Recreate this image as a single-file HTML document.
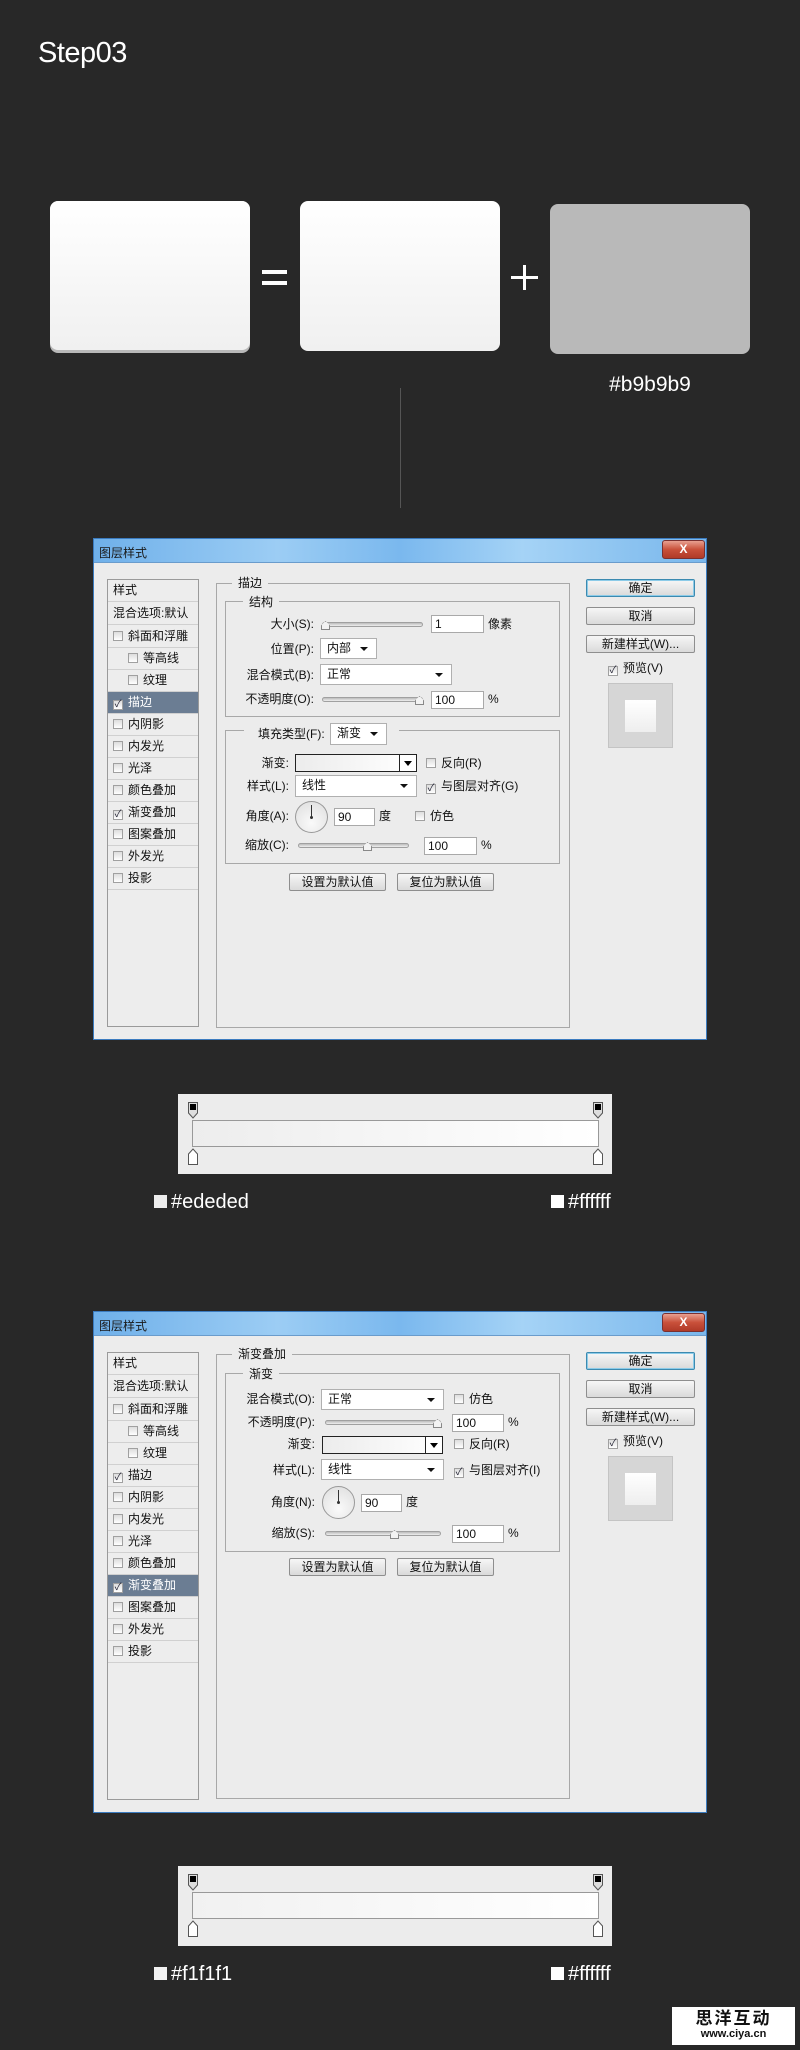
<!DOCTYPE html>
<html><head><meta charset="utf-8">
<style>
*{margin:0;padding:0;box-sizing:border-box}
body{width:800px;height:2050px;background:#282828;position:relative;overflow:hidden;font-family:"Liberation Sans","Noto Sans CJK SC",sans-serif}
.a{position:absolute;line-height:14px;white-space:nowrap}
.dlg{position:absolute;left:93px;width:614px;height:502px;background:#ececec;border:1px solid #3b7bbf;font-size:12px;color:#111;font-family:"Liberation Sans","Noto Sans CJK SC",sans-serif}
.tb{position:absolute;left:0;top:0;width:612px;height:24px;background:linear-gradient(90deg,#6fb0ea,#9ccdf4 30%,#7ab8ee 50%,#a5d3f6 70%,#79b7ec);border-bottom:1px solid #6a9ccc}
.tb span{position:absolute;left:5px;top:5px;font-size:12px;color:#1a1a1a}
.cls{position:absolute;left:568px;top:1px;width:43px;height:19px;border:1px solid #7a3030;border-radius:3px;background:linear-gradient(#e8a090,#c9503a 50%,#b03a28);color:#fff;font-weight:bold;font-size:12px;text-align:center;line-height:17px}
.list{position:absolute;left:13px;top:40px;width:92px;height:448px;border:1px solid #9a9a9a;background:#ededed}
.row{position:absolute;left:0;width:90px;height:22px;border-bottom:1px solid #d0d0d0;line-height:20px;white-space:nowrap}
.sel{background:#6b7d93;color:#fff}
.cb{display:inline-block;width:10px;height:10px;border:1px solid #a0a0a0;background:linear-gradient(#ddd,#fff);vertical-align:-1px;margin-right:5px;position:relative;font-size:10px;line-height:8px;color:#223;text-align:center}
.panel{position:absolute;border:1px solid #a8a8a8}
.lg{position:absolute;background:#ececec;padding:0 6px;line-height:14px}
.lbl{position:absolute;text-align:right;width:120px;line-height:14px;white-space:nowrap}
.inp{position:absolute;height:18px;background:#fff;border:1px solid #a9a9a9;line-height:16px;padding-left:3px}
.dd{position:absolute;height:21px;background:#fff;border:1px solid #b0b0b0;line-height:19px;padding-left:6px}
.dd:after{content:"";position:absolute;right:8px;top:8px;border-left:4px solid transparent;border-right:4px solid transparent;border-top:4px solid #111}
.sl{position:absolute;height:5px;border:1px solid #a0a0a0;border-radius:3px;background:linear-gradient(#bbb,#eee)}
.th{position:absolute;top:-2px;width:9px;height:9px;border:1px solid #888;background:#f3f3f3;clip-path:polygon(50% 0,100% 50%,100% 100%,0 100%,0 50%)}
.btn{position:absolute;height:18px;border:1px solid #8e8e8e;border-radius:2px;background:linear-gradient(#f6f6f6,#dadada);text-align:center;line-height:16px}
.gb{position:absolute;height:18px;border:1px solid #222;background:linear-gradient(90deg,#ececec,#fff)}
.gb:after{content:"";position:absolute;right:0;top:0;width:16px;height:16px;border-left:1px solid #222;background:#fff}
.gb:before{content:"";position:absolute;right:4px;top:6px;z-index:2;border-left:4px solid transparent;border-right:4px solid transparent;border-top:5px solid #000}
.dial{position:absolute;width:33px;height:32px;border-radius:50%;border:1px solid #999;background:radial-gradient(circle at 50% 70%,#fafafa,#ddd)}
.dial:before{content:"";position:absolute;left:15px;top:3px;width:1px;height:12px;background:#333}
.dial:after{content:"";position:absolute;left:14px;top:14px;width:3px;height:3px;border-radius:50%;background:#333}
.gp{position:absolute;left:178px;width:434px;height:80px;background:#ececec}
.bar{position:absolute;left:14px;top:26px;width:407px;height:27px;border:1px solid #999;background:linear-gradient(90deg,#ededed,#fff)}
.st{position:absolute;width:10px;height:16px}
.hex{position:absolute;color:#fff;font-size:20px;line-height:20px}
.sq{display:inline-block;width:13px;height:13px;margin-right:4px;vertical-align:0}
</style></head><body>

<div class="a" style="left:38px;top:36px;color:#fff;font-size:29px;line-height:34px;letter-spacing:-0.5px">Step03</div>

<div class="a" style="left:50px;top:201px;width:200px;height:152px;border-radius:8px;background:#b9b9b9"></div>
<div class="a" style="left:50px;top:201px;width:200px;height:149px;border-radius:8px;background:linear-gradient(#fff,#f0f0f0)"></div>
<div class="a" style="left:262px;top:270px;width:25px;height:4px;background:#fff"></div>
<div class="a" style="left:262px;top:281px;width:25px;height:4px;background:#fff"></div>
<div class="a" style="left:300px;top:201px;width:200px;height:150px;border-radius:8px;background:linear-gradient(#fff,#f0f0f0)"></div>
<div class="a" style="left:511px;top:276px;width:27px;height:3px;background:#fff"></div>
<div class="a" style="left:523px;top:265px;width:3px;height:25px;background:#fff"></div>
<div class="a" style="left:550px;top:204px;width:200px;height:150px;border-radius:8px;background:#b9b9b9"></div>
<div class="a" style="left:550px;top:374px;width:200px;text-align:center;color:#fff;font-size:21px;line-height:22px">#b9b9b9</div>
<div class="a" style="left:400px;top:388px;width:1px;height:120px;background:#555"></div>

<!-- Dialog 1 -->
<div class="dlg" style="top:538px">
 <div class="tb"><span>图层样式</span></div><div class="cls">X</div>
 <div class="list">
  <div class="row" style="top:0;padding-left:5px">样式</div>
  <div class="row" style="top:23px;padding-left:5px">混合选项:默认</div>
  <div class="row" style="top:46px;padding-left:5px"><span class="cb"></span>斜面和浮雕</div>
  <div class="row" style="top:68px;padding-left:20px"><span class="cb"></span>等高线</div>
  <div class="row" style="top:90px;padding-left:20px"><span class="cb"></span>纹理</div>
  <div class="row sel" style="top:112px;padding-left:5px"><span class="cb">✓</span>描边</div>
  <div class="row" style="top:134px;padding-left:5px"><span class="cb"></span>内阴影</div>
  <div class="row" style="top:156px;padding-left:5px"><span class="cb"></span>内发光</div>
  <div class="row" style="top:178px;padding-left:5px"><span class="cb"></span>光泽</div>
  <div class="row" style="top:200px;padding-left:5px"><span class="cb"></span>颜色叠加</div>
  <div class="row" style="top:222px;padding-left:5px"><span class="cb">✓</span>渐变叠加</div>
  <div class="row" style="top:244px;padding-left:5px"><span class="cb"></span>图案叠加</div>
  <div class="row" style="top:266px;padding-left:5px"><span class="cb"></span>外发光</div>
  <div class="row" style="top:288px;padding-left:5px"><span class="cb"></span>投影</div>
 </div>
 <div class="panel" style="left:122px;top:44px;width:354px;height:445px"></div>
 <div class="lg" style="left:138px;top:37px">描边</div>
 <div class="panel" style="left:131px;top:62px;width:335px;height:116px"></div>
 <div class="lg" style="left:149px;top:56px">结构</div>
 <div class="lbl" style="left:100px;top:78px">大小(S):</div>
 <div class="sl" style="left:228px;top:83px;width:101px"><div class="th" style="left:-2px"></div></div>
 <div class="inp" style="left:337px;top:76px;width:53px">1</div>
 <div class="a" style="left:394px;top:78px">像素</div>
 <div class="lbl" style="left:100px;top:103px">位置(P):</div>
 <div class="dd" style="left:226px;top:99px;width:57px">内部</div>
 <div class="lbl" style="left:100px;top:129px">混合模式(B):</div>
 <div class="dd" style="left:226px;top:125px;width:132px">正常</div>
 <div class="lbl" style="left:100px;top:153px">不透明度(O):</div>
 <div class="sl" style="left:228px;top:158px;width:101px"><div class="th" style="left:92px"></div></div>
 <div class="inp" style="left:337px;top:152px;width:53px">100</div>
 <div class="a" style="left:394px;top:153px">%</div>
 <div class="panel" style="left:131px;top:191px;width:335px;height:134px"></div>
 <div class="lg" style="left:150px;top:188px;padding-left:14px;padding-right:74px">填充类型(F):</div>
 <div class="dd" style="left:236px;top:184px;width:57px;height:22px">渐变</div>
 <div class="lbl" style="left:75px;top:217px">渐变:</div>
 <div class="gb" style="left:201px;top:215px;width:122px"></div>
 <div class="a" style="left:332px;top:217px"><span class="cb"></span>反向(R)</div>
 <div class="lbl" style="left:75px;top:240px">样式(L):</div>
 <div class="dd" style="left:201px;top:236px;width:122px;height:22px">线性</div>
 <div class="a" style="left:332px;top:240px"><span class="cb">✓</span>与图层对齐(G)</div>
 <div class="lbl" style="left:75px;top:270px">角度(A):</div>
 <div class="dial" style="left:201px;top:262px"></div>
 <div class="inp" style="left:240px;top:269px;width:41px">90</div>
 <div class="a" style="left:285px;top:270px">度</div>
 <div class="a" style="left:321px;top:270px"><span class="cb"></span>仿色</div>
 <div class="lbl" style="left:75px;top:299px">缩放(C):</div>
 <div class="sl" style="left:204px;top:304px;width:111px"><div class="th" style="left:64px"></div></div>
 <div class="inp" style="left:330px;top:298px;width:53px">100</div>
 <div class="a" style="left:387px;top:299px">%</div>
 <div class="btn" style="left:195px;top:334px;width:97px">设置为默认值</div>
 <div class="btn" style="left:303px;top:334px;width:97px">复位为默认值</div>
 <div class="btn" style="left:492px;top:40px;width:109px;border-color:#3c8ab0;box-shadow:inset 0 0 0 1px #8ccbe8">确定</div>
 <div class="btn" style="left:492px;top:68px;width:109px">取消</div>
 <div class="btn" style="left:492px;top:96px;width:109px">新建样式(W)...</div>
 <div class="a" style="left:514px;top:122px"><span class="cb">✓</span>预览(V)</div>
 <div class="a" style="left:514px;top:144px;width:65px;height:65px;background:#d6d6d6;border:1px solid #c4c4c4"></div>
 <div class="a" style="left:531px;top:161px;width:31px;height:32px;background:linear-gradient(#fff,#eee)"></div>
</div>

<div class="gp" style="top:1094px">
 <div class="bar"></div>
 <div class="st" style="left:10px;top:8px"><svg width="10" height="17"><path d="M.5 .5H9.5V11L5 16 .5 11Z" fill="#ddd" stroke="#555"/><rect x="2" y="2" width="6" height="6" fill="#000"/></svg></div>
 <div class="st" style="left:415px;top:8px"><svg width="10" height="17"><path d="M.5 .5H9.5V11L5 16 .5 11Z" fill="#ddd" stroke="#555"/><rect x="2" y="2" width="6" height="6" fill="#000"/></svg></div>
 <div class="st" style="left:10px;top:54px"><svg width="10" height="17"><path d="M.5 16.5H9.5V6L5 1 .5 6Z" fill="#fff" stroke="#555"/></svg></div>
 <div class="st" style="left:415px;top:54px"><svg width="10" height="17"><path d="M.5 16.5H9.5V6L5 1 .5 6Z" fill="#fff" stroke="#555"/></svg></div>
</div>
<div class="hex" style="left:154px;top:1192px"><span class="sq" style="background:#ededed"></span>#ededed</div>
<div class="hex" style="left:551px;top:1192px"><span class="sq" style="background:#fff"></span>#ffffff</div>

<!-- Dialog 2 -->
<div class="dlg" style="top:1311px">
 <div class="tb"><span>图层样式</span></div><div class="cls">X</div>
 <div class="list">
  <div class="row" style="top:0;padding-left:5px">样式</div>
  <div class="row" style="top:23px;padding-left:5px">混合选项:默认</div>
  <div class="row" style="top:46px;padding-left:5px"><span class="cb"></span>斜面和浮雕</div>
  <div class="row" style="top:68px;padding-left:20px"><span class="cb"></span>等高线</div>
  <div class="row" style="top:90px;padding-left:20px"><span class="cb"></span>纹理</div>
  <div class="row" style="top:112px;padding-left:5px"><span class="cb">✓</span>描边</div>
  <div class="row" style="top:134px;padding-left:5px"><span class="cb"></span>内阴影</div>
  <div class="row" style="top:156px;padding-left:5px"><span class="cb"></span>内发光</div>
  <div class="row" style="top:178px;padding-left:5px"><span class="cb"></span>光泽</div>
  <div class="row" style="top:200px;padding-left:5px"><span class="cb"></span>颜色叠加</div>
  <div class="row sel" style="top:222px;padding-left:5px"><span class="cb">✓</span>渐变叠加</div>
  <div class="row" style="top:244px;padding-left:5px"><span class="cb"></span>图案叠加</div>
  <div class="row" style="top:266px;padding-left:5px"><span class="cb"></span>外发光</div>
  <div class="row" style="top:288px;padding-left:5px"><span class="cb"></span>投影</div>
 </div>
 <div class="panel" style="left:122px;top:42px;width:354px;height:445px"></div>
 <div class="lg" style="left:138px;top:35px">渐变叠加</div>
 <div class="panel" style="left:131px;top:61px;width:335px;height:179px"></div>
 <div class="lg" style="left:149px;top:55px">渐变</div>
 <div class="lbl" style="left:101px;top:80px">混合模式(O):</div>
 <div class="dd" style="left:227px;top:77px;width:123px">正常</div>
 <div class="a" style="left:360px;top:80px"><span class="cb"></span>仿色</div>
 <div class="lbl" style="left:101px;top:103px">不透明度(P):</div>
 <div class="sl" style="left:231px;top:108px;width:116px"><div class="th" style="left:107px"></div></div>
 <div class="inp" style="left:358px;top:102px;width:52px">100</div>
 <div class="a" style="left:414px;top:103px">%</div>
 <div class="lbl" style="left:101px;top:125px">渐变:</div>
 <div class="gb" style="left:228px;top:124px;width:121px"></div>
 <div class="a" style="left:360px;top:125px"><span class="cb"></span>反向(R)</div>
 <div class="lbl" style="left:101px;top:151px">样式(L):</div>
 <div class="dd" style="left:227px;top:147px;width:123px">线性</div>
 <div class="a" style="left:360px;top:151px"><span class="cb">✓</span>与图层对齐(I)</div>
 <div class="lbl" style="left:101px;top:183px">角度(N):</div>
 <div class="dial" style="left:228px;top:174px;height:33px"></div>
 <div class="inp" style="left:267px;top:182px;width:41px">90</div>
 <div class="a" style="left:312px;top:183px">度</div>
 <div class="lbl" style="left:101px;top:214px">缩放(S):</div>
 <div class="sl" style="left:231px;top:219px;width:116px"><div class="th" style="left:64px"></div></div>
 <div class="inp" style="left:358px;top:213px;width:52px">100</div>
 <div class="a" style="left:414px;top:214px">%</div>
 <div class="btn" style="left:195px;top:246px;width:97px">设置为默认值</div>
 <div class="btn" style="left:303px;top:246px;width:97px">复位为默认值</div>
 <div class="btn" style="left:492px;top:40px;width:109px;border-color:#3c8ab0;box-shadow:inset 0 0 0 1px #8ccbe8">确定</div>
 <div class="btn" style="left:492px;top:68px;width:109px">取消</div>
 <div class="btn" style="left:492px;top:96px;width:109px">新建样式(W)...</div>
 <div class="a" style="left:514px;top:122px"><span class="cb">✓</span>预览(V)</div>
 <div class="a" style="left:514px;top:144px;width:65px;height:65px;background:#d6d6d6;border:1px solid #c4c4c4"></div>
 <div class="a" style="left:531px;top:161px;width:31px;height:32px;background:linear-gradient(#fff,#eee)"></div>
</div>

<div class="gp" style="top:1866px">
 <div class="bar" style="background:linear-gradient(90deg,#f1f1f1,#fff)"></div>
 <div class="st" style="left:10px;top:8px"><svg width="10" height="17"><path d="M.5 .5H9.5V11L5 16 .5 11Z" fill="#ddd" stroke="#555"/><rect x="2" y="2" width="6" height="6" fill="#000"/></svg></div>
 <div class="st" style="left:415px;top:8px"><svg width="10" height="17"><path d="M.5 .5H9.5V11L5 16 .5 11Z" fill="#ddd" stroke="#555"/><rect x="2" y="2" width="6" height="6" fill="#000"/></svg></div>
 <div class="st" style="left:10px;top:54px"><svg width="10" height="17"><path d="M.5 16.5H9.5V6L5 1 .5 6Z" fill="#fff" stroke="#555"/></svg></div>
 <div class="st" style="left:415px;top:54px"><svg width="10" height="17"><path d="M.5 16.5H9.5V6L5 1 .5 6Z" fill="#fff" stroke="#555"/></svg></div>
</div>
<div class="hex" style="left:154px;top:1964px"><span class="sq" style="background:#f1f1f1"></span>#f1f1f1</div>
<div class="hex" style="left:551px;top:1964px"><span class="sq" style="background:#fff"></span>#ffffff</div>

<div class="a" style="left:672px;top:2007px;width:123px;height:38px;background:#fff;text-align:center">
 <div style="font-size:17px;line-height:19px;font-weight:bold;color:#111;letter-spacing:2px;margin-top:2px">思洋互动</div>
 <div style="font-size:11px;line-height:13px;font-weight:bold;color:#111">www.ciya.cn</div>
</div>
</body></html>
